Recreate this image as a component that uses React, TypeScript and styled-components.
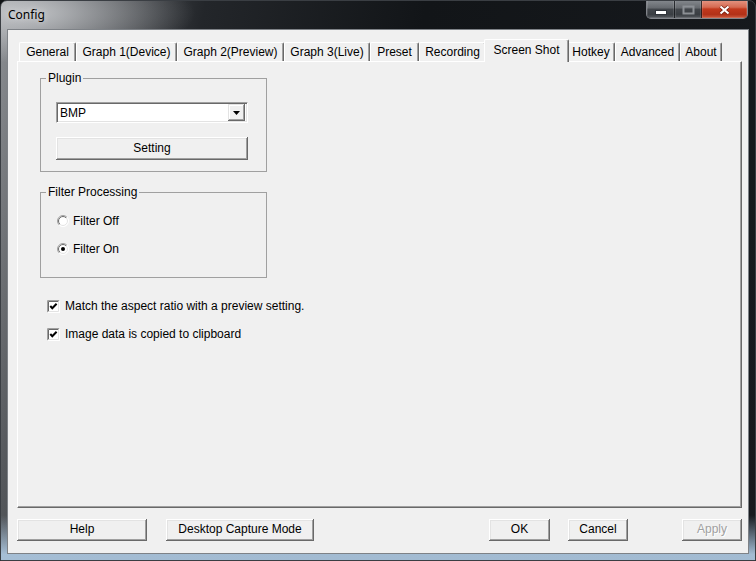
import React, { FC, useId } from "react";
import styled, { createGlobalStyle } from "styled-components";

const GlobalStyle = createGlobalStyle`
  html, body {
    margin: 0;
    padding: 0;
    background: #101316;
  }
  body {
    width: 756px;
    height: 561px;
    overflow: hidden;
    font-family: "Liberation Sans", Arial, sans-serif;
  }
`;

const tabs = [
  { label: "General", w: 57 },
  { label: "Graph 1(Device)", w: 101 },
  { label: "Graph 2(Preview)", w: 107 },
  { label: "Graph 3(Live)", w: 86 },
  { label: "Preset", w: 49 },
  { label: "Recording", w: 67 },
  { label: "Screen Shot", w: 81, active: true },
  { label: "Hotkey", w: 48 },
  { label: "Advanced", w: 65 },
  { label: "About", w: 42 },
];

const Radio: FC<{ checked?: boolean }> = ({ checked }) => {
  const id = useId().replace(/:/g, "");
  return (
    <svg width="12" height="12" viewBox="0 0 12 12">
      <defs>
        <linearGradient id={`o${id}`} x1="0" y1="0" x2="1" y2="1">
          <stop offset="0.5" stopColor="#a0a0a0" />
          <stop offset="0.5" stopColor="#ffffff" />
        </linearGradient>
        <linearGradient id={`i${id}`} x1="0" y1="0" x2="1" y2="1">
          <stop offset="0.5" stopColor="#696969" />
          <stop offset="0.5" stopColor="#e3e3e3" />
        </linearGradient>
      </defs>
      <circle cx="6" cy="6" r="5.5" fill="#fff" stroke={`url(#o${id})`} />
      <circle cx="6" cy="6" r="4.5" fill="#fff" stroke={`url(#i${id})`} />
      {checked && <circle cx="6" cy="6" r="2" fill="#000" />}
    </svg>
  );
};

const Check: FC<{ checked?: boolean }> = ({ checked }) => (
  <svg width="13" height="13" viewBox="0 0 13 13">
    <rect x="0" y="0" width="13" height="13" fill="#fff" />
    <path d="M0.5 12.5V0.5H12.5" stroke="#a0a0a0" fill="none" />
    <path d="M1.5 11.5V1.5H11.5" stroke="#696969" fill="none" />
    <path d="M0.5 12.5H12.5V0.5" stroke="#ffffff" fill="none" />
    <path d="M1.5 11.5H11.5V1.5" stroke="#e3e3e3" fill="none" />
    {checked && (
      <path d="M3.3 6L5.3 8.3L9.6 3.8" stroke="#000" strokeWidth="2" fill="none" />
    )}
  </svg>
);

export default function App() {
  return (
    <>
      <GlobalStyle />
      <Window>
        <TitleBar>
          <Title>Config</Title>
          <CaptionGroup>
            <CaptionButton $w={27}>
              <svg width="12" height="5" viewBox="0 0 12 5" style={{ marginTop: 10 }}>
                <rect x="0.5" y="0.5" width="11" height="4" fill="#fff" stroke="#30343a" />
              </svg>
            </CaptionButton>
            <CaptionButton $w={27}>
              <svg width="13" height="10" viewBox="0 0 13 10" style={{ marginTop: 5 }}>
                <rect x="1.5" y="1.5" width="10" height="7" fill="none" stroke="#8c9095" strokeWidth="2" />
              </svg>
            </CaptionButton>
            <CaptionButton $w={46} $close>
              <svg width="13" height="10" viewBox="0 0 13 10" style={{ marginTop: 5 }}>
                <path d="M2.5 1.5L10.5 8.5M10.5 1.5L2.5 8.5" stroke="#6e1a0c" strokeWidth="3.6" />
                <path d="M2.5 1.5L10.5 8.5M10.5 1.5L2.5 8.5" stroke="#fff" strokeWidth="2.2" />
              </svg>
            </CaptionButton>
          </CaptionGroup>
        </TitleBar>

        <Client>
          <TabStrip>
            {tabs.map((t) => (
              <Tab key={t.label} $w={t.w} $active={t.active}>
                {t.label}
              </Tab>
            ))}
          </TabStrip>

          <Panel>
            <Group>
              <Legend>Plugin</Legend>
              <GroupBody $pad="17px 17px 11px 15px">
                <Combo>
                  <ComboText>BMP</ComboText>
                  <DropButton>
                    <svg width="7" height="4" viewBox="0 0 7 4">
                      <polygon points="0,0 7,0 3.5,4" fill="#000" />
                    </svg>
                  </DropButton>
                </Combo>
                <Button $w={192} $h={23} $mt={14}>
                  Setting
                </Button>
              </GroupBody>
            </Group>

            <Group $mt={13}>
              <Legend>Filter Processing</Legend>
              <GroupBody $pad="14px 16px 20px 16px">
                <OptionRow>
                  <Radio />
                  <OptionLabel $gap={4}>Filter Off</OptionLabel>
                </OptionRow>
                <OptionRow $mt={12}>
                  <Radio checked />
                  <OptionLabel $gap={4}>Filter On</OptionLabel>
                </OptionRow>
              </GroupBody>
            </Group>

            <CheckList>
              <OptionRow>
                <Check checked />
                <OptionLabel $gap={5}>Match the aspect ratio with a preview setting.</OptionLabel>
              </OptionRow>
              <OptionRow $mt={12}>
                <Check checked />
                <OptionLabel $gap={5}>Image data is copied to clipboard</OptionLabel>
              </OptionRow>
            </CheckList>
          </Panel>

          <Footer>
            <Button $w={130}>Help</Button>
            <Button $w={148} $ml={19}>
              Desktop Capture Mode
            </Button>
            <Spacer />
            <Button $w={61}>OK</Button>
            <Button $w={60} $ml={18}>
              Cancel
            </Button>
            <Button $w={60} $ml={54} $disabled>
              Apply
            </Button>
          </Footer>
        </Client>
      </Window>
    </>
  );
}

const Window = styled.div`
  box-sizing: border-box;
  width: 756px;
  height: 561px;
  display: flex;
  flex-direction: column;
  border: 1px solid #3a3e43;
  border-radius: 7px 7px 0 0;
  overflow: hidden;
  background:
    radial-gradient(ellipse 170px 50px at 24px 12px, rgba(205, 207, 210, 0.85), rgba(205, 207, 210, 0) 100%),
    linear-gradient(to bottom, rgba(150, 180, 208, 0) 92%, rgba(170, 196, 220, 0.95) 99%),
    linear-gradient(100deg, #8d9094 0%, #55585c 10%, #23262a 24%, #121518 50%, #171a1e 100%);
`;

const TitleBar = styled.div`
  height: 28px;
  flex: none;
  display: flex;
  justify-content: space-between;
  align-items: flex-start;
  padding-left: 7px;
`;

const Title = styled.div`
  margin-top: 6px;
  font-family: "Noto Sans", "Liberation Sans", sans-serif;
  font-size: 12px;
  line-height: 16px;
  color: #000;
  text-shadow: 0 0 6px rgba(255, 255, 255, 0.6);
`;

const CaptionGroup = styled.div`
  box-sizing: border-box;
  display: flex;
  height: 19px;
  margin-top: -1px;
  margin-right: 7px;
  border: 1px solid rgba(220, 225, 232, 0.55);
  border-top: none;
  border-radius: 0 0 5px 5px;
  overflow: hidden;
`;

const CaptionButton = styled.div<{ $w: number; $close?: boolean }>`
  box-sizing: border-box;
  width: ${(p) => p.$w}px;
  height: 18px;
  display: flex;
  justify-content: center;
  align-items: flex-start;
  & + & {
    border-left: 1px solid rgba(20, 22, 26, 0.8);
  }
  box-shadow: inset 0 0 0 1px rgba(255, 255, 255, 0.12);
  background: ${(p) =>
    p.$close
      ? "linear-gradient(to bottom, #e59784 0%, #d56a52 40%, #c2391d 50%, #b23118 80%, #cc5a3e 100%)"
      : "linear-gradient(to bottom, #868a8f 0%, #65696e 45%, #43474c 50%, #3a3e43 80%, #55595e 100%)"};
`;

const Client = styled.div`
  flex: 1;
  display: flex;
  flex-direction: column;
  margin: 0 6px 6px;
  border: 1px solid #7e8287;
  background: #f0f0f0;
  padding: 9px 6px 12px 9px;
  color: #000;
  font-size: 12px;
`;

const TabStrip = styled.div`
  position: relative;
  z-index: 1;
  height: 22px;
  display: flex;
  align-items: flex-end;
  padding-left: 2px;
`;

const Tab = styled.div<{ $w: number; $active?: boolean }>`
  box-sizing: border-box;
  position: relative;
  z-index: ${(p) => (p.$active ? 2 : 1)};
  width: ${(p) => p.$w + (p.$active ? 4 : 0)}px;
  height: ${(p) => (p.$active ? 23 : 19)}px;
  margin: 0 ${(p) => (p.$active ? -2 : 0)}px ${(p) => (p.$active ? -1 : 0)}px;
  padding-bottom: ${(p) => (p.$active ? 3 : 0)}px;
  display: flex;
  align-items: center;
  justify-content: center;
  white-space: nowrap;
  font-size: 12px;
  line-height: 14px;
  color: #000;
  background: #f0f0f0;
  border-top: 1px solid #fff;
  border-left: 1px solid #fff;
  border-right: 1px solid #696969;
  border-radius: 2px 2px 0 0;
  box-shadow: inset -1px 0 #a0a0a0;
`;

const Panel = styled.div`
  box-sizing: border-box;
  flex: 1;
  display: flex;
  flex-direction: column;
  align-items: flex-start;
  border: 1px solid;
  border-color: #fff #696969 #696969 #fff;
  box-shadow: inset -1px -1px #a0a0a0;
  padding: 9px 0 0 22px;
`;

const Group = styled.fieldset<{ $mt?: number }>`
  box-sizing: border-box;
  width: 227px;
  margin: ${(p) => p.$mt ?? 0}px 0 0 0;
  padding: 0;
  border: 1px solid #a0a0a0;
  min-inline-size: 0;
`;

const Legend = styled.legend`
  margin-left: 5px;
  padding: 0 2px;
  font-size: 12px;
  line-height: 14px;
  color: #000;
`;

const GroupBody = styled.div<{ $pad: string }>`
  display: flex;
  flex-direction: column;
  align-items: flex-start;
  padding: ${(p) => p.$pad};
`;

const Combo = styled.div`
  box-sizing: border-box;
  width: 192px;
  height: 21px;
  display: flex;
  align-items: center;
  padding: 2px;
  background: #fff;
  border: 1px solid;
  border-color: #a0a0a0 #fff #fff #a0a0a0;
  box-shadow: inset 1px 1px #696969, inset -1px -1px #e3e3e3;
`;

const ComboText = styled.div`
  flex: 1;
  padding-left: 1px;
  font-size: 12px;
  line-height: 14px;
`;

const DropButton = styled.div`
  box-sizing: border-box;
  width: 17px;
  height: 17px;
  display: flex;
  align-items: center;
  justify-content: center;
  padding-top: 1px;
  background: #f0f0f0;
  box-shadow: inset -1px -1px #696969, inset 1px 1px #e3e3e3, inset -2px -2px #a0a0a0, inset 2px 2px #fff;
`;

const Button = styled.div<{ $w: number; $h?: number; $mt?: number; $ml?: number; $disabled?: boolean }>`
  box-sizing: border-box;
  flex: none;
  width: ${(p) => p.$w}px;
  height: ${(p) => p.$h ?? 22}px;
  margin-top: ${(p) => p.$mt ?? 0}px;
  margin-left: ${(p) => p.$ml ?? 0}px;
  padding-bottom: 2px;
  display: flex;
  align-items: center;
  justify-content: center;
  font-size: 12px;
  line-height: 14px;
  color: ${(p) => (p.$disabled ? "#a0a0a0" : "#000")};
  text-shadow: ${(p) => (p.$disabled ? "1px 1px 0 #fff" : "none")};
  background: #f0f0f0;
  box-shadow: inset -1px -1px #696969, inset 1px 1px #fff, inset -2px -2px #a0a0a0, inset 2px 2px #e3e3e3;
`;

const OptionRow = styled.div<{ $mt?: number }>`
  height: 16px;
  display: flex;
  align-items: center;
  margin-top: ${(p) => p.$mt ?? 0}px;
`;

const OptionLabel = styled.span<{ $gap: number }>`
  margin-left: ${(p) => p.$gap}px;
  font-size: 12px;
  line-height: 14px;
  white-space: nowrap;
`;

const CheckList = styled.div`
  margin: 20px 0 0 7px;
`;

const Footer = styled.div`
  display: flex;
  align-items: center;
  margin-top: 11px;
`;

const Spacer = styled.div`
  flex: 1;
`;
